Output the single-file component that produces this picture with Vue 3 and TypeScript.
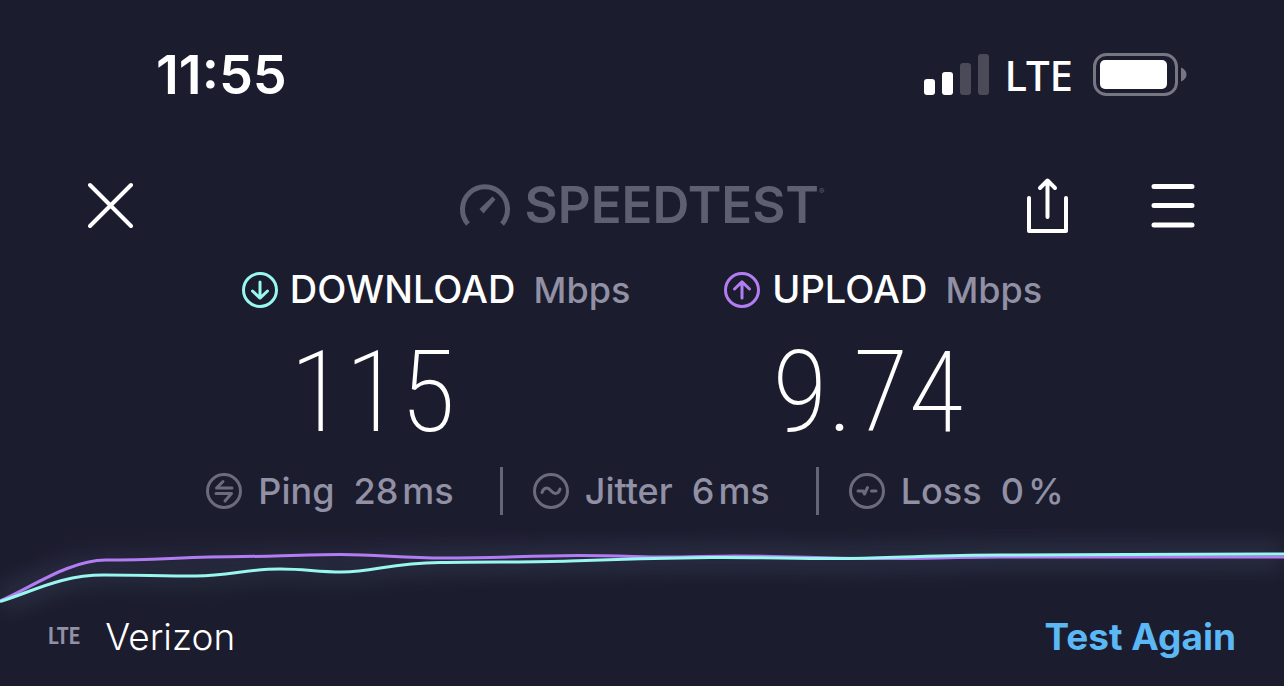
<script setup lang="ts">
interface Speed {
  kind: 'down' | 'up'
  label: string
  unit: string
  value: string
  arrow: string
}

interface Stat {
  label: string
  value: string
  unit: string
  icon: string
}

const speeds: Speed[] = [
  { kind: 'down', label: 'DOWNLOAD', unit: 'Mbps', value: '115', arrow: 'M18 10V26M10.5 19L18 26.2L25.5 19' },
  { kind: 'up', label: 'UPLOAD', unit: 'Mbps', value: '9.74', arrow: 'M18 26V10M10.5 17L18 9.8L25.5 17' },
]

const stats: Stat[] = [
  { label: 'Ping', value: '28', unit: 'ms', icon: 'M26 15H10.5L17 8.5M10 20.5H25.5L19 28' },
  { label: 'Jitter', value: '6', unit: 'ms', icon: 'M9 19.5C10.5 14.5 14.5 13.5 18 17.8C21.5 22 25.5 21 27 16' },
  { label: 'Loss', value: '0', unit: '%', icon: 'M9 18H14L15.5 21L18.5 14.5M22.5 18H27' },
]

const uploadLine =
  'M0 71C32 57 70 30 106 30C150 30 170 28 210 27C260 27 300 24.5 340 24.5C380 24.5 400 28 445 28C500 28 540 25.5 578 25.5C620 25.5 640 27 665 27C690 27 710 26 735 26C790 26 820 28.5 870 28.5C930 28.5 960 27 1000 27H1284'
const downloadLine =
  'M0 71.5C32 62 60 45 104 45C140 45 160 46 196 46C230 46 245 39 280 39C306 39 316 42 342 42C374 42 390 33 440 32.5C490 31.5 530 32.5 570 31C620 29 660 28 710 27.5C760 27 800 29 850 28.5C910 27.5 940 25 1000 25C1100 25 1180 24 1284 24'
</script>

<template>
  <main class="screen">
    <header class="status">
      <time class="clock">11:55</time>
      <div class="radio">
        <svg class="bars" viewBox="0 0 66 42" aria-hidden="true">
          <rect x="0" y="25" width="11" height="16" rx="3" fill="#fff" />
          <rect x="18" y="18" width="11" height="23" rx="3" fill="#fff" />
          <rect x="36" y="9" width="11" height="32" rx="3" fill="#4b4a58" />
          <rect x="54" y="0" width="11" height="41" rx="3" fill="#4b4a58" />
        </svg>
        <span class="network">LTE</span>
        <svg class="battery" viewBox="0 0 94 44" aria-hidden="true">
          <rect x="1.5" y="1.5" width="82" height="40" rx="12" fill="none" stroke="#777682" stroke-width="3" />
          <rect x="7" y="7" width="67" height="29" rx="5" fill="#fff" />
          <path d="M88 14.5C91.5 16 93.5 18.5 93.5 21.5S91.5 27 88 28.5Z" fill="#777682" />
        </svg>
      </div>
    </header>

    <nav class="toolbar">
      <button class="icon-button" type="button" aria-label="Close">
        <svg width="46" height="60" viewBox="0 0 46 60"><path d="M2 10L43 51M43 10L2 51" /></svg>
      </button>
      <div class="brand">
        <svg width="52" height="44" viewBox="0 0 52 44" aria-hidden="true">
          <path d="M9 41A22.5 22.5 0 1 1 43 41" fill="none" stroke="#5f5f72" stroke-width="5" />
          <path d="M20.500 26L33.500 13.500L36.500 16.500L24.500 30.500Z" fill="#5f5f72" />
        </svg>
        <span class="brand-name">SPEEDTEST</span><span class="mark">®</span>
      </div>
      <div class="actions">
        <button class="icon-button" type="button" aria-label="Share">
          <svg width="42" height="60" viewBox="0 0 42 60">
            <path d="M2 23V56H39V23" />
            <path d="M20.5 42V6M13 13L20.5 5.500L28 13" />
          </svg>
        </button>
        <button class="icon-button menu" type="button" aria-label="Menu">
          <svg width="44" height="60" viewBox="0 0 44 60"><path d="M3 11.5H41M3 30.5H41M3 50H41" /></svg>
        </button>
      </div>
    </nav>

    <section class="speeds">
      <article v-for="s in speeds" :key="s.kind" class="speed" :class="s.kind">
        <svg class="ring" width="36" height="36" viewBox="0 0 36 36" aria-hidden="true">
          <circle cx="18" cy="18" r="16.5" /><path :d="s.arrow" />
        </svg>
        <h2 class="title">{{ s.label }} <span class="unit">{{ s.unit }}</span></h2>
        <p class="value">{{ s.value }}</p>
      </article>
    </section>

    <section class="stats">
      <div v-for="s in stats" :key="s.label" class="stat">
        <svg class="ring" width="36" height="36" viewBox="0 0 36 36" aria-hidden="true">
          <circle cx="18" cy="18" r="16.5" /><path :d="s.icon" />
        </svg>
        <span>{{ s.label }}</span>
        <span class="reading"><span>{{ s.value }}</span><span>{{ s.unit }}</span></span>
      </div>
    </section>

    <svg class="chart" viewBox="0 0 1284 80" preserveAspectRatio="none" aria-hidden="true">
      <defs>
        <filter id="glow" x="-5%" y="-100%" width="110%" height="300%">
          <feGaussianBlur stdDeviation="12" />
        </filter>
      </defs>
      <path :d="uploadLine" class="halo up-line" filter="url(#glow)" />
      <path :d="downloadLine" class="halo down-line" filter="url(#glow)" />
      <path :d="uploadLine" class="line up-line" />
      <path :d="downloadLine" class="line down-line" />
    </svg>

    <footer class="footer">
      <span class="tech">LTE</span>
      <span class="carrier">Verizon</span>
      <button class="again" type="button">Test Again</button>
    </footer>
  </main>
</template>

<style>
body {
  background: #1b1c2d;
}
</style>

<style scoped>
.screen {
  min-height: 100vh;
  box-sizing: border-box;
  padding-top: 49px;
  overflow: hidden;
  background: #1b1c2d;
  color: #fff;
  font-family: Inter, "Liberation Sans", sans-serif;
}
button {
  padding: 0;
  border: 0;
  background: none;
  color: inherit;
  font: inherit;
  cursor: pointer;
}
svg {
  display: block;
  flex: none;
}
.status {
  display: flex;
  justify-content: space-between;
  align-items: center;
  height: 52px;
  padding: 0 97px 0 156px;
}
.clock {
  font-size: 54px;
  line-height: 56px;
  font-weight: 600;
}
.radio {
  display: flex;
  align-items: center;
}
.bars {
  width: 66px;
  height: 42px;
}
.network {
  margin: 0 20px 0 14px;
  font: 500 42px/54px "Noto Sans", sans-serif;
}
.battery {
  width: 94px;
  height: 44px;
}
.toolbar {
  display: grid;
  grid-template-columns: 1fr auto 1fr;
  align-items: center;
  height: 60px;
  margin-top: 74px;
  padding: 0 89px 0 88px;
}
.icon-button {
  justify-self: start;
}
.icon-button path {
  fill: none;
  stroke: #fff;
  stroke-width: 4;
  stroke-linecap: round;
  stroke-linejoin: round;
}
.menu path {
  stroke-width: 5;
}
.brand {
  display: flex;
  align-items: center;
  color: #5f5f72;
}
.brand-name {
  margin-left: 14px;
  font-size: 51px;
  line-height: 60px;
  font-weight: 600;
}
.mark {
  align-self: flex-start;
  margin-top: 12px;
  font-size: 8px;
  line-height: 8px;
}
.actions {
  display: flex;
  justify-content: flex-end;
  gap: 82px;
}
.speeds {
  display: flex;
  justify-content: center;
  gap: 94px;
  margin-top: 33px;
}
.speed {
  display: grid;
  grid-template-columns: 36px auto;
  column-gap: 12px;
  align-items: center;
}
.ring {
  fill: none;
  stroke: currentColor;
  stroke-width: 3;
  stroke-linecap: round;
  stroke-linejoin: round;
}
.down .ring {
  color: #98f7ee;
}
.up .ring {
  color: #b27df2;
}
.title {
  margin: 0;
  font-size: 38px;
  line-height: 42px;
  font-weight: 500;
}
.unit {
  margin-left: 8px;
  color: #9190a5;
  font-size: 36px;
}
.value {
  grid-column: 2;
  margin: 0;
  padding-top: 28px;
  font: 200 114px/106px "Roboto Condensed", Roboto, sans-serif;
}
.stats {
  display: flex;
  justify-content: center;
  margin-top: 22px;
  color: #9190a5;
  font-size: 36px;
  line-height: 48px;
  font-weight: 500;
}
.stat {
  display: flex;
  align-items: center;
  gap: 16px;
  padding: 0 46px 0 30px;
}
.stat + .stat {
  border-left: 3px solid #656578;
}
.stat:first-child {
  padding-left: 0;
}
.stat:last-child {
  padding-right: 14px;
}
.stat .ring {
  color: #6b6a7e;
}
.reading {
  display: flex;
  gap: 4px;
  margin-left: 3px;
}
.chart {
  width: 100%;
  height: 80px;
  margin-top: 15px;
  overflow: visible;
}
.line,
.halo {
  fill: none;
  stroke-width: 3;
}
.halo {
  stroke-width: 26;
  opacity: 0.06;
}
.up-line {
  stroke: #b27df2;
}
.down-line {
  stroke: #98f7ee;
}
.footer {
  display: flex;
  align-items: center;
  margin-top: 4px;
  padding: 0 48px;
  font-size: 37px;
  line-height: 46px;
}
.tech {
  color: #9190a5;
  font: 600 23px/46px "Roboto Condensed", Roboto, sans-serif;
}
.carrier {
  margin-left: 25px;
  font-weight: 300;
}
.again {
  margin-left: auto;
  color: #5bb8f5;
  font-weight: 700;
}
</style>
